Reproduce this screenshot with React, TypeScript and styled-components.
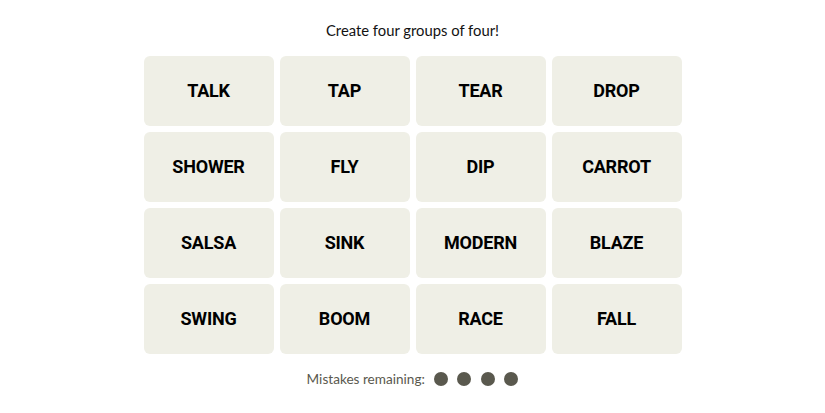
import React from 'react';
import styled, { createGlobalStyle } from 'styled-components';

const GlobalStyle = createGlobalStyle`
  body {
    margin: 0;
    background: #ffffff;
    font-family: 'Lato', 'Liberation Sans', sans-serif;
  }
`;

const Page = styled.main`
  display: flex;
  flex-direction: column;
  align-items: center;
  padding-top: 20px;
`;

const Prompt = styled.p`
  margin: 0 0 16px;
  font-size: 14.8px;
  color: #121212;
  height: 20px;
  line-height: 20px;
`;

const Board = styled.div`
  display: grid;
  grid-template-columns: repeat(4, 130px);
  grid-auto-rows: 70px;
  gap: 6px;
`;

const Tile = styled.button`
  border: none;
  border-radius: 6px;
  background: #efefe6;
  color: #000;
  padding: 0 0 2px;
  font-family: 'Roboto', 'Liberation Sans', sans-serif;
  font-weight: 700;
  font-size: 18px;
  letter-spacing: -0.2px;
  text-transform: uppercase;
  cursor: pointer;
`;

const Mistakes = styled.div`
  display: flex;
  align-items: center;
  gap: 9px;
  margin-top: 17px;
  font-size: 13.6px;
  color: #5a594e;
`;

const Dots = styled.span`
  display: flex;
  gap: 9.5px;
`;

const Dot = styled.span`
  width: 14px;
  height: 14px;
  border-radius: 50%;
  background: #5a594e;
`;

const words = [
  'Talk', 'Tap', 'Tear', 'Drop',
  'Shower', 'Fly', 'Dip', 'Carrot',
  'Salsa', 'Sink', 'Modern', 'Blaze',
  'Swing', 'Boom', 'Race', 'Fall',
];

const App: React.FC = () => {
  return (
    <>
      <GlobalStyle />
      <Page>
        <Prompt>Create four groups of four!</Prompt>
        <Board>
          {words.map((w) => (
            <Tile key={w}>{w}</Tile>
          ))}
        </Board>
        <Mistakes>
          Mistakes remaining:
          <Dots>
            {[0, 1, 2, 3].map((i) => (
              <Dot key={i} />
            ))}
          </Dots>
        </Mistakes>
      </Page>
    </>
  );
};

export default App;
